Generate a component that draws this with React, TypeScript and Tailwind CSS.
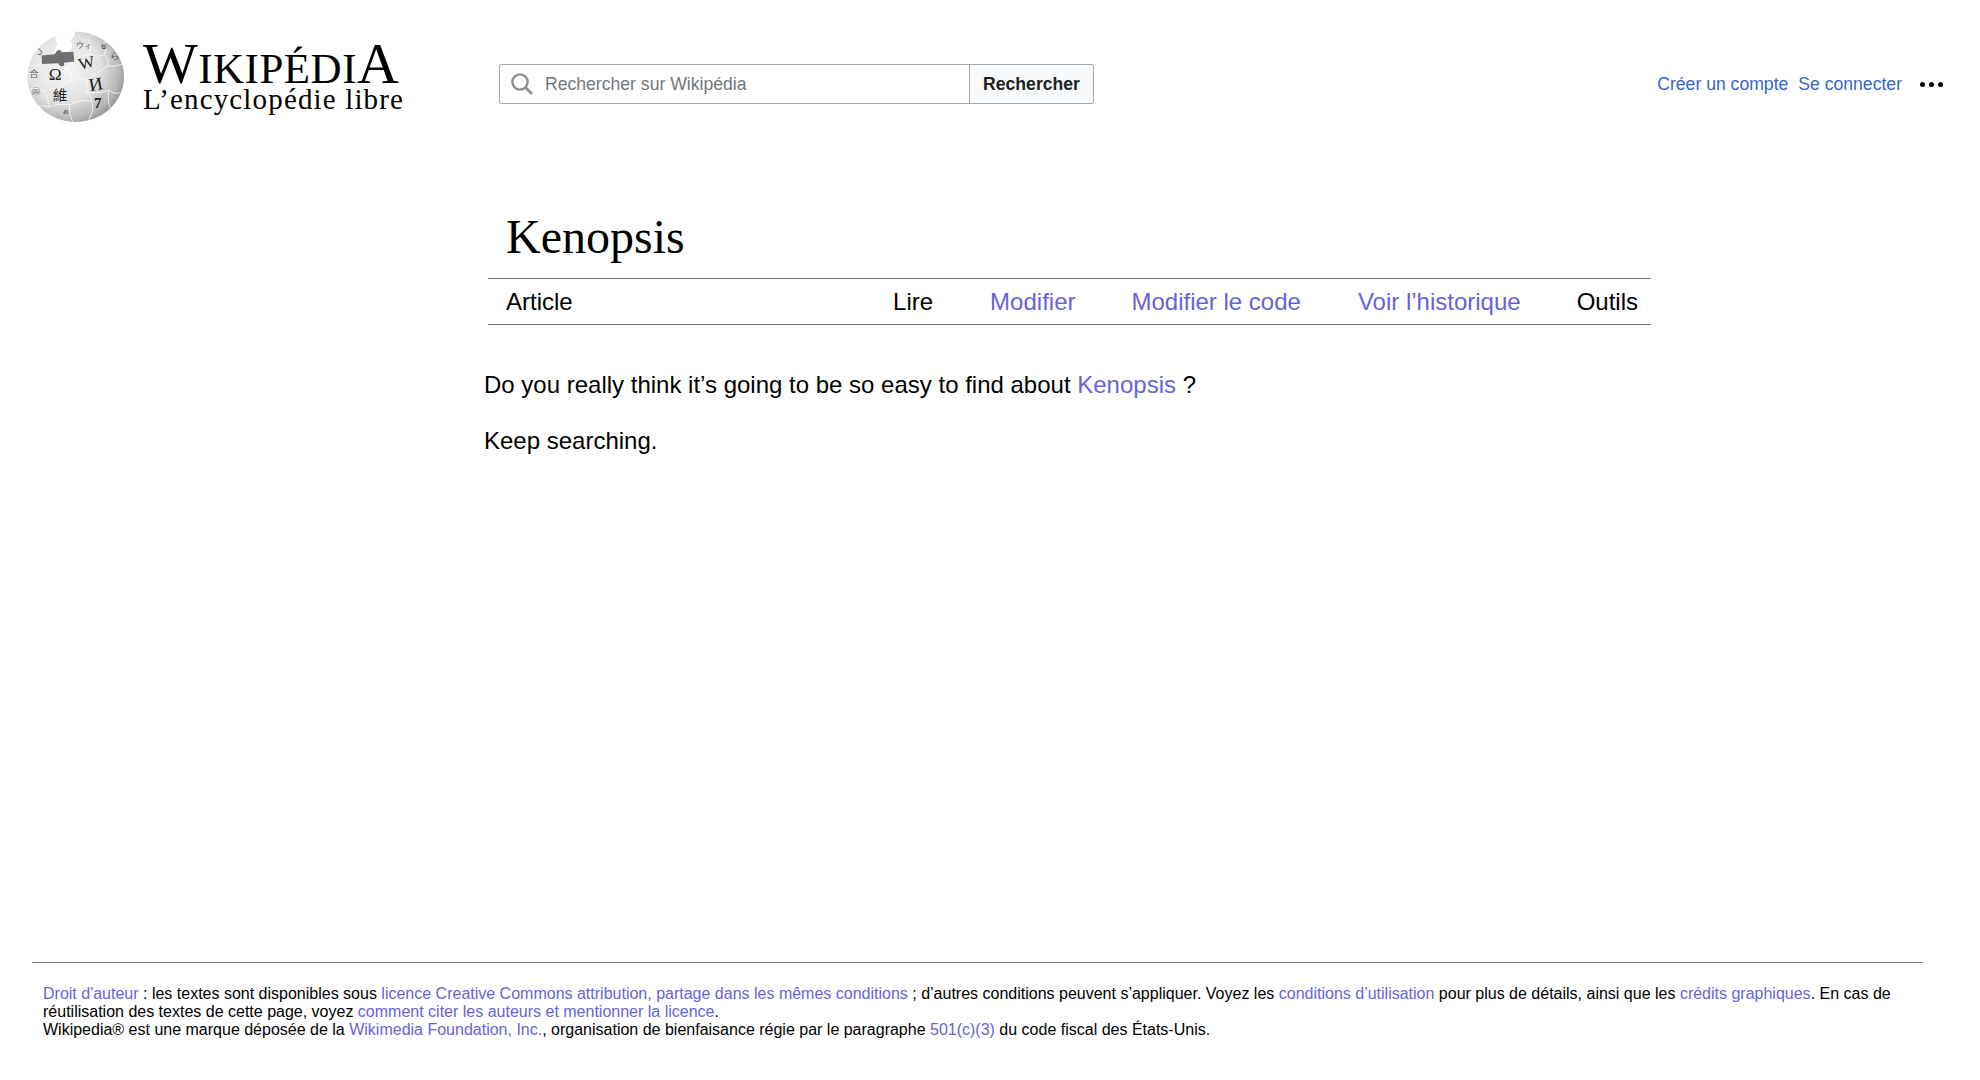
const arial = { fontFamily: '"Liberation Sans", Arial, sans-serif' }

const Globe = () => (
  <svg width="120" height="98" viewBox="0 0 360 315" preserveAspectRatio="none" className="mt-[3px] shrink-0">
    <defs>
      <radialGradient id="ball" cx="38%" cy="40%" r="68%">
        <stop offset="0%" stopColor="#f6f6f6" />
        <stop offset="55%" stopColor="#e2e2e2" />
        <stop offset="85%" stopColor="#b5b5b5" />
        <stop offset="100%" stopColor="#8a8a8a" />
      </radialGradient>
      <clipPath id="ballClip">
        <circle cx="167" cy="157" r="145" />
      </clipPath>
    </defs>
    <circle cx="167" cy="157" r="145" fill="url(#ball)" />
    <g clipPath="url(#ballClip)">
      {/* missing pieces at the top */}
      <path d="M104 0 L107 40 Q116 52 106 62 L104 84 L152 72 Q160 54 152 40 L162 28 L168 0 Z" fill="#fff" />
      <path d="M20 0 L58 38 Q76 28 92 26 L104 0 Z" fill="#fff" />
      {/* dark piece */}
      <path d="M65 88 L104 84 Q108 78 112 72 Q122 68 126 78 L160 76 L163 108 L132 112 Q136 124 124 124 Q114 122 116 113 L66 116 Z" fill="#6f6f6f" />
      {/* puzzle seams */}
      <g fill="none" stroke="#fbfbfb" strokeWidth="2.5">
        <path d="M66 116 Q40 124 22 118" />
        <path d="M116 118 Q126 134 146 132 Q160 150 150 172 Q128 176 120 198 Q96 188 74 204 Q56 190 24 196" />
        <path d="M150 172 Q176 154 198 168 Q206 186 196 204 Q214 216 216 236 Q178 226 148 248 Q118 240 88 254 Q60 246 46 252" />
        <path d="M162 108 Q186 88 210 84 Q232 96 254 86 Q270 100 262 122 Q282 128 306 116" />
        <path d="M198 168 Q228 150 262 122" />
        <path d="M196 204 Q232 214 268 200 Q282 216 310 206" />
        <path d="M216 236 Q224 262 206 296" />
        <path d="M268 200 Q258 230 274 264" />
        <path d="M210 84 Q216 60 204 34" />
        <path d="M254 86 Q262 58 250 26" />
        <path d="M74 204 Q82 226 88 254" />
        <path d="M148 248 Q146 276 158 302" />
      </g>
      {/* letters on the pieces */}
      <g fill="#222" style={{ fontFamily: '"Liberation Serif", serif' }}>
        <text x="86" y="168" fontSize="52">Ω</text>
        <text x="176" y="130" fontSize="52" transform="rotate(-14 195 115)">W</text>
        <text x="206" y="200" fontSize="58" transform="rotate(-10 225 180)">И</text>
        <text x="222" y="256" fontSize="46" fontWeight="700">7</text>
        <text x="98" y="232" fontSize="44" style={{ fontFamily: '"Noto Sans CJK TC", serif' }}>維</text>
        <text x="168" y="64" fontSize="24" fill="#555" style={{ fontFamily: '"Noto Sans CJK JP", serif' }}>ウィ</text>
        <text x="270" y="100" fontSize="30" fill="#444">ら</text>
        <text x="28" y="156" fontSize="28" fill="#666" style={{ fontFamily: '"Noto Sans CJK SC", serif' }}>合</text>
        <text x="36" y="208" fontSize="26" fill="#666" style={{ fontFamily: '"Noto Sans CJK SC", serif' }}>இ</text>
        <text x="130" y="278" fontSize="26" fill="#777">ລ</text>
        <text x="242" y="66" fontSize="26" fill="#444">ಅ</text>
        <text x="48" y="84" fontSize="24" fill="#555" transform="rotate(-35 55 75)">ل</text>
      </g>
    </g>
  </svg>
)

const Wordmark = () => (
  <div className="ml-[3px] mt-[17px] text-black" style={{ fontFamily: '"Liberation Serif", "Times New Roman", serif' }}>
    <div className="h-[41px] text-[43px] leading-[44px] tracking-[0.5px] whitespace-nowrap">
      <span className="text-[58px]">W</span>IKIPÉDI<span className="text-[58px]">A</span>
    </div>
    <div className="h-[32px] text-[29px] leading-[32px] tracking-[1.15px] whitespace-nowrap">L’encyclopédie libre</div>
  </div>
)

const SearchIcon = () => (
  <svg width="22" height="22" viewBox="0 0 22 22" fill="none" stroke="#8d8d8d" strokeWidth="2.4" className="shrink-0">
    <circle cx="9" cy="9" r="7.6" />
    <path d="M14.6 14.6 L21 21" strokeWidth="2.8" />
  </svg>
)

const A = ({ children }: { children: React.ReactNode }) => <a className="text-[#6a62d8]">{children}</a>

export default function App() {
  return (
    <div className="h-[1080px] w-[1980px] overflow-hidden bg-white text-black" style={arial}>
      <header className="flex h-[132px] items-start">
        <div className="ml-[20px] mt-[25px] flex w-[479px] shrink-0">
          <Globe />
          <Wordmark />
        </div>
        <div className="mt-[64px] flex h-[40px] w-[595px] rounded-[2px] border border-[#a2a9b1]">
          <div className="flex flex-1 items-center pl-[11px]">
            <SearchIcon />
            <span className="ml-[12px] text-[17.6px] text-[#72777d]">Rechercher sur Wikipédia</span>
          </div>
          <div className="flex w-[124px] items-center justify-center border-l border-[#a2a9b1] bg-[#f8f9fa] text-[17.6px] font-bold text-[#202122]">
            Rechercher
          </div>
        </div>
        <div className="ml-auto mt-[72px] flex items-center pr-[37px] text-[17.6px] leading-[24px] text-[#3366cc]">
          <a>Créer un compte</a>
          <a className="ml-[10px]">Se connecter</a>
          <div className="ml-[18px] flex gap-[4px]">
            <span className="h-[5px] w-[5px] rounded-full bg-black" />
            <span className="h-[5px] w-[5px] rounded-full bg-black" />
            <span className="h-[5px] w-[5px] rounded-full bg-black" />
          </div>
        </div>
      </header>

      <main className="ml-[484px] h-[830px]">
        <div className="ml-[4px] w-[1163px]">
          <h1 className="h-[146px] pl-[18px] pt-[75px] text-[48px] leading-[60px]" style={{ fontFamily: '"Liberation Serif", "Times New Roman", serif' }}>
            Kenopsis
          </h1>
          <nav className="flex h-[47px] items-center border-y border-[#72777d] pl-[18px] pr-[13px] text-[24px]">
            <span className="mr-auto">Article</span>
            <span>Lire</span>
            <a className="ml-[57px] text-[#6a62d8]">Modifier</a>
            <a className="ml-[56px] text-[#6a62d8]">Modifier le code</a>
            <a className="ml-[57px] text-[#6a62d8]">Voir l’historique</a>
            <span className="ml-[56px]">Outils</span>
          </nav>
        </div>
        <p className="mt-[44px] text-[24px] leading-[32px]">
          Do you really think it’s going to be so easy to find about <A>Kenopsis</A> ?
        </p>
        <p className="mt-[24px] text-[24px] leading-[32px]">Keep searching.</p>
      </main>

      <footer className="ml-[32px] mr-[57px] border-t border-[#72777d] pl-[11px] pt-[22px] text-[16px] leading-[18px]">
        <p>
          <A>Droit d'auteur</A> : les textes sont disponibles sous <A>licence Creative Commons attribution, partage dans les mêmes conditions</A> ; d’autres conditions peuvent s’appliquer. Voyez les <A>conditions d’utilisation</A> pour plus de détails, ainsi que les <A>crédits graphiques</A>. En cas de réutilisation des textes de cette page, voyez <A>comment citer les auteurs et mentionner la licence</A>.
        </p>
        <p>
          Wikipedia® est une marque déposée de la <A>Wikimedia Foundation, Inc.</A>, organisation de bienfaisance régie par le paragraphe <A>501(c)(3)</A> du code fiscal des États-Unis.
        </p>
      </footer>
    </div>
  )
}
